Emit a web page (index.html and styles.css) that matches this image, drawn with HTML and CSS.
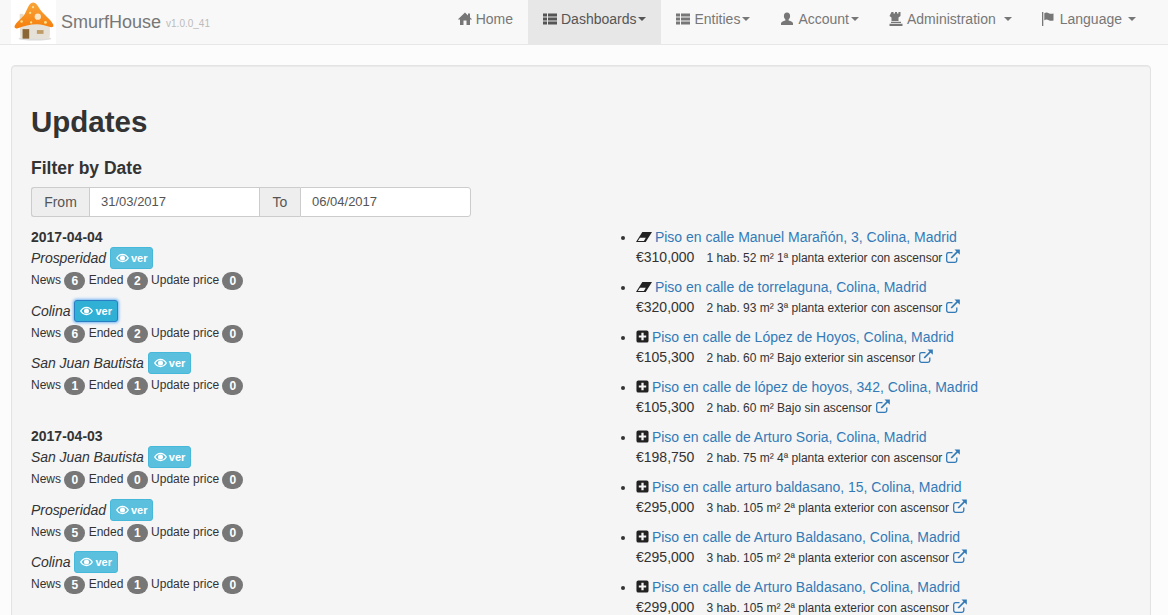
FILE: index.html
```html
<!DOCTYPE html>
<html lang="en">
<head>
  <meta charset="UTF-8">
  <meta name="viewport" content="width=device-width, initial-scale=1.0">
  <title>SmurfHouse</title>
  <link rel="stylesheet" href="styles.css">
</head>
<body>
  <svg class="icon-defs" width="0" height="0">
    <symbol id="i-home" viewBox="0 0 14 14"><path d="M7 .5 L10 3.400 V1.500 H12 V5.400 L14.200 7.500 H12 V13 H8.500 V8.500 H5.500 V13 H2 V7.500 H-.2 Z"/></symbol>
    <symbol id="i-list" viewBox="0 0 14 14"><path d="M0 1.500h4v3H0zM5 1.500h9v3H5zM0 5.500h4v3H0zM5 5.500h9v3H5zM0 9.500h4v3H0zM5 9.500h9v3H5z"/></symbol>
    <symbol id="i-user" viewBox="0 0 14 14"><path d="M7 .5c2 0 3.100 1.500 3.100 3.500 0 1.500-.6 2.700-1.500 3.400v1.100c2.500.7 4.400 1.500 4.400 2.800V13H1v-1.700c0-1.300 1.900-2.100 4.400-2.800V7.400C4.500 6.700 3.900 5.500 3.900 4 3.900 2 5 .5 7 .5z"/></symbol>
    <symbol id="i-tower" viewBox="0 0 14 14"><path d="M2.500 0h2v1.500h1.500V0h2v1.500h1.500V0h2v4l-2 1.500v3.500h-7V5.500l-2-1.500zM2 9.800h10v1.200H2zM.5 11.800h13V14H.5z"/></symbol>
    <symbol id="i-flag" viewBox="0 0 14 14"><path d="M0 0h1.300v14H0zM2.300 1.200c1.500-.8 3-.8 4.500 0s3 .8 4.700.2v7c-1.700.6-3.200.6-4.700-.2s-3-.8-4.500 0z"/></symbol>
    <symbol id="i-eye" viewBox="0 0 14 10"><path fill-rule="evenodd" d="M7 .5C10 .5 12.500 2.500 14 5c-1.500 2.500-4 4.500-7 4.500S1.500 7.500 0 5C1.500 2.500 4 .5 7 .5zM7 1.700C4.900 1.700 2.900 3 1.600 5 2.900 7 4.900 8.300 7 8.300S11.100 7 12.400 5C11.100 3 9.100 1.700 7 1.700zM7 2.300A2.700 2.700 0 1 1 7 7.700 2.700 2.700 0 0 1 7 2.300z"/></symbol>
    <symbol id="i-eraser" viewBox="0 0 16 12"><path d="M6.300 1H16L9.700 11H0z"/><path fill="#f5f5f5" d="M1.800 10 4 6.800H9.800L7.900 10z"/></symbol>
    <symbol id="i-plus" viewBox="0 0 14 14"><path fill-rule="evenodd" d="M2.500 .5h9a2 2 0 0 1 2 2v9a2 2 0 0 1-2 2h-9a2 2 0 0 1-2-2v-9a2 2 0 0 1 2-2zM5.800 3v2.800H3v2.400h2.800V11h2.400V8.200H11V5.800H8.200V3z"/></symbol>
    <symbol id="i-ext" viewBox="0 0 14 14"><path fill="none" stroke="currentColor" stroke-width="1.300" d="M10.800 8.500v3a1.800 1.800 0 0 1-1.800 1.800H2.500A1.800 1.800 0 0 1 .7 11.500V5.500A1.800 1.800 0 0 1 2.500 3.700H6.500"/><path fill="none" stroke="currentColor" stroke-width="1.700" d="M5.200 9 11.500 2.700"/><path d="M8.500 .4H13.800V5.700z"/></symbol>
  </svg>

  <nav class="navbar">
    <a class="brand" href="#">
      <span class="brand-logo">
        <svg width="42" height="42" viewBox="0 0 44 43">
          <defs>
            <linearGradient id="cap" x1="0" y1="0" x2="0" y2="1">
              <stop offset="0" stop-color="#f9a53c"/>
              <stop offset="1" stop-color="#f57f0c"/>
            </linearGradient>
          </defs>
          <ellipse cx="23" cy="40" rx="17" ry="2" fill="#dcdcdc"/>
          <path d="M7 14h4v8H7z" fill="#e8dcc8"/>
          <path d="M8 24h30c1 5 1 11 0 16H8c-1-5-1-11 0-16z" fill="#e6e1d8"/>
          <path d="M10 30h7v10h-7z" fill="#8a6636"/>
          <path d="M25 31h7v4h-7z" fill="#c09c68"/>
          <path d="M21 2c3 0 5 3 7 7 4 6 11 10 14 16 1 2 0 3-2 3-5-1-10-3-15-3-7 0-14 2-20 4-3 1-4-1-3-3 2-4 6-6 9-10 4-5 5-14 10-14z" fill="url(#cap)"/>
          <circle cx="26" cy="17" r="3.300" fill="#fbe6c4"/>
          <circle cx="21" cy="7" r="1.200" fill="#fde08a"/>
          <circle cx="18" cy="13" r="1.200" fill="#fde08a"/>
          <circle cx="9" cy="22" r="1.300" fill="#fde08a"/>
          <circle cx="34" cy="23" r="1.500" fill="#fde08a"/>
          <circle cx="19" cy="23" r="1.200" fill="#fde08a"/>
        </svg>
      </span>
      <span class="brand-name">SmurfHouse</span>
      <small class="brand-version">v1.0.0_41</small>
    </a>
    <ul class="nav-menu">
      <li><a href="#"><svg class="ico"><use href="#i-home"/></svg>Home</a></li>
      <li class="active"><a href="#"><svg class="ico"><use href="#i-list"/></svg>Dashboards<b class="caret"></b></a></li>
      <li><a href="#"><svg class="ico"><use href="#i-list"/></svg>Entities<b class="caret"></b></a></li>
      <li><a href="#"><svg class="ico"><use href="#i-user"/></svg>Account<b class="caret"></b></a></li>
      <li class="nav-admin"><a href="#"><svg class="ico"><use href="#i-tower"/></svg>Administration <b class="caret caret-spaced"></b></a></li>
      <li><a href="#"><svg class="ico"><use href="#i-flag"/></svg>Language <b class="caret caret-spaced"></b></a></li>
    </ul>
  </nav>

  <div class="well">
    <h1>Updates</h1>
    <h3>Filter by Date</h3>
    <div class="input-group">
      <span class="addon">From</span>
      <input class="date-input date-from" type="text" value="31/03/2017">
      <span class="addon addon-mid">To</span>
      <input class="date-input date-to" type="text" value="06/04/2017">
    </div>

    <div class="row">
      <div class="col">
        <section class="day">
          <h5>2017-04-04</h5>
          <div class="zone">
            <div class="zone-name"><em>Prosperidad</em> <a class="btn-ver" href="#"><svg class="ico-eye"><use href="#i-eye"/></svg>ver</a></div>
            <div class="counts">News <span class="badge">6</span> Ended <span class="badge">2</span> Update price <span class="badge">0</span></div>
          </div>
          <div class="zone">
            <div class="zone-name"><em>Colina</em> <a class="btn-ver focus" href="#"><svg class="ico-eye"><use href="#i-eye"/></svg>ver</a></div>
            <div class="counts">News <span class="badge">6</span> Ended <span class="badge">2</span> Update price <span class="badge">0</span></div>
          </div>
          <div class="zone">
            <div class="zone-name"><em>San Juan Bautista</em> <a class="btn-ver" href="#"><svg class="ico-eye"><use href="#i-eye"/></svg>ver</a></div>
            <div class="counts">News <span class="badge">1</span> Ended <span class="badge">1</span> Update price <span class="badge">0</span></div>
          </div>
        </section>
        <section class="day">
          <h5>2017-04-03</h5>
          <div class="zone">
            <div class="zone-name"><em>San Juan Bautista</em> <a class="btn-ver" href="#"><svg class="ico-eye"><use href="#i-eye"/></svg>ver</a></div>
            <div class="counts">News <span class="badge">0</span> Ended <span class="badge">0</span> Update price <span class="badge">0</span></div>
          </div>
          <div class="zone">
            <div class="zone-name"><em>Prosperidad</em> <a class="btn-ver" href="#"><svg class="ico-eye"><use href="#i-eye"/></svg>ver</a></div>
            <div class="counts">News <span class="badge">5</span> Ended <span class="badge">1</span> Update price <span class="badge">0</span></div>
          </div>
          <div class="zone">
            <div class="zone-name"><em>Colina</em> <a class="btn-ver" href="#"><svg class="ico-eye"><use href="#i-eye"/></svg>ver</a></div>
            <div class="counts">News <span class="badge">5</span> Ended <span class="badge">1</span> Update price <span class="badge">0</span></div>
          </div>
        </section>
      </div>

      <div class="col">
        <ul class="flats">
          <li>
            <svg class="ico-eraser"><use href="#i-eraser"/></svg> <a href="#">Piso en calle Manuel Marañón, 3, Colina, Madrid</a>
            <div class="flat-info"><span class="price">€310,000</span><small>1 hab. 52 m² 1ª planta exterior con ascensor</small> <a href="#"><svg class="ico-ext"><use href="#i-ext"/></svg></a></div>
          </li>
          <li>
            <svg class="ico-eraser"><use href="#i-eraser"/></svg> <a href="#">Piso en calle de torrelaguna, Colina, Madrid</a>
            <div class="flat-info"><span class="price">€320,000</span><small>2 hab. 93 m² 3ª planta exterior con ascensor</small> <a href="#"><svg class="ico-ext"><use href="#i-ext"/></svg></a></div>
          </li>
          <li>
            <svg class="ico-plus"><use href="#i-plus"/></svg> <a href="#">Piso en calle de López de Hoyos, Colina, Madrid</a>
            <div class="flat-info"><span class="price">€105,300</span><small>2 hab. 60 m² Bajo exterior sin ascensor</small> <a href="#"><svg class="ico-ext"><use href="#i-ext"/></svg></a></div>
          </li>
          <li>
            <svg class="ico-plus"><use href="#i-plus"/></svg> <a href="#">Piso en calle de lópez de hoyos, 342, Colina, Madrid</a>
            <div class="flat-info"><span class="price">€105,300</span><small>2 hab. 60 m² Bajo sin ascensor</small> <a href="#"><svg class="ico-ext"><use href="#i-ext"/></svg></a></div>
          </li>
          <li>
            <svg class="ico-plus"><use href="#i-plus"/></svg> <a href="#">Piso en calle de Arturo Soria, Colina, Madrid</a>
            <div class="flat-info"><span class="price">€198,750</span><small>2 hab. 75 m² 4ª planta exterior con ascensor</small> <a href="#"><svg class="ico-ext"><use href="#i-ext"/></svg></a></div>
          </li>
          <li>
            <svg class="ico-plus"><use href="#i-plus"/></svg> <a href="#">Piso en calle arturo baldasano, 15, Colina, Madrid</a>
            <div class="flat-info"><span class="price">€295,000</span><small>3 hab. 105 m² 2ª planta exterior con ascensor</small> <a href="#"><svg class="ico-ext"><use href="#i-ext"/></svg></a></div>
          </li>
          <li>
            <svg class="ico-plus"><use href="#i-plus"/></svg> <a href="#">Piso en calle de Arturo Baldasano, Colina, Madrid</a>
            <div class="flat-info"><span class="price">€295,000</span><small>3 hab. 105 m² 2ª planta exterior con ascensor</small> <a href="#"><svg class="ico-ext"><use href="#i-ext"/></svg></a></div>
          </li>
          <li>
            <svg class="ico-plus"><use href="#i-plus"/></svg> <a href="#">Piso en calle de Arturo Baldasano, Colina, Madrid</a>
            <div class="flat-info"><span class="price">€299,000</span><small>3 hab. 105 m² 2ª planta exterior con ascensor</small> <a href="#"><svg class="ico-ext"><use href="#i-ext"/></svg></a></div>
          </li>
        </ul>
      </div>
    </div>
  </div>
</body>
</html>
```

FILE: styles.css
```css
html {
  overflow: hidden;
}

body {
  margin: 0;
  background-color: #fcfcfc;
  color: #333;
  font-family: "Liberation Sans", Arial, sans-serif;
  font-size: 14px;
  line-height: 20px;
}

a {
  color: #337ab7;
  text-decoration: none;
}

.icon-defs {
  position: absolute;
}

/* navbar */
.navbar {
  display: flex;
  height: 44px;
  background-color: #f8f8f8;
  border-bottom: 1px solid #e7e7e7;
  margin-bottom: 20px;
}

.brand {
  display: flex;
  align-items: center;
  margin-left: 11px;
  color: #777;
}

.brand-logo {
  display: block;
  width: 45px;
  height: 44px;
  background-color: #fff;
}

.brand-logo svg {
  display: block;
  margin-left: 2px;
}

.brand-name {
  margin-left: 5px;
  font-size: 18px;
}

.brand-version {
  margin: 3px 0 0 5px;
  color: #bbb;
  font-size: 10px;
}

.nav-menu {
  display: flex;
  list-style: none;
  margin: 0 17px 0 auto;
  padding: 0;
}

.nav-menu a {
  display: flex;
  align-items: center;
  height: 38px;
  padding: 0 15px 6px;
  color: #777;
}

.nav-menu .active a {
  background-color: #e7e7e7;
  color: #555;
}

.ico {
  width: 14px;
  height: 14px;
  margin-right: 4px;
  fill: currentColor;
}

.caret {
  display: inline-block;
  margin-left: 2px;
  border-top: 4px solid;
  border-left: 4px solid transparent;
  border-right: 4px solid transparent;
}

.caret-spaced {
  margin-left: 6px;
}

.nav-admin .caret-spaced {
  margin-left: 8px;
}

/* main panel */
.well {
  margin: 0 17px 20px 11px;
  padding: 19px;
  min-height: 600px;
  background-color: #f5f5f5;
  border: 1px solid #e3e3e3;
  border-radius: 4px;
  box-shadow: inset 0 1px 1px rgba(0, 0, 0, 0.05);
}

h1 {
  margin: 17px 0 0;
  font-size: 29.500px;
  font-weight: 700;
  line-height: 40px;
}

h3 {
  margin: 16px 0 9px;
  font-size: 17.5px;
  font-weight: 700;
  line-height: 20px;
}

.input-group {
  display: flex;
  width: 440px;
  height: 30px;
}

.addon {
  box-sizing: border-box;
  width: 58px;
  padding-top: 4px;
  text-align: center;
  color: #555;
  background-color: #eee;
  border: 1px solid #ccc;
  border-right: 0;
  border-radius: 3px 0 0 3px;
}

.addon-mid {
  width: 41px;
  border-radius: 0;
}

.date-input {
  box-sizing: border-box;
  height: 30px;
  padding: 0 11px 2px;
  color: #555;
  font-family: inherit;
  font-size: 13px;
  background-color: #fff;
  border: 1px solid #ccc;
}

.date-from {
  width: 170px;
  border-right: 0;
}

.date-to {
  width: 171px;
  border-radius: 0 3px 3px 0;
}

.row {
  display: flex;
  margin: 10px -15px 0;
}

.col {
  width: 50%;
  padding: 0 15px;
}

/* left column */
.day {
  margin-bottom: 31px;
}

h5 {
  margin: 0;
  font-size: 14px;
  font-weight: 700;
  line-height: 20px;
}

.zone {
  margin-bottom: 9.6px;
}

.zone-name {
  display: flex;
  align-items: center;
  gap: 4px;
  height: 22px;
}

.zone-name em {
  letter-spacing: -0.05px;
}

.btn-ver {
  display: inline-flex;
  align-items: center;
  box-sizing: border-box;
  height: 22px;
  padding: 0 5px;
  color: #fff;
  font-size: 11px;
  font-weight: 700;
  background-color: #5bc0de;
  border: 1px solid #46b8da;
  border-radius: 3px;
}

.btn-ver.focus {
  background-color: #31b0d5;
  border-color: #2a7fc4;
  box-shadow: 0 0 3px 1px #74b5f2;
}

.ico-eye {
  width: 13px;
  height: 10px;
  margin-right: 2px;
  fill: currentColor;
}

.counts {
  margin-top: 1px;
  height: 20px;
  font-size: 12px;
  white-space: nowrap;
}

.badge {
  display: inline-block;
  min-width: 7px;
  padding: 3px 7px;
  color: #fff;
  font-size: 12px;
  font-weight: 700;
  line-height: 12px;
  text-align: center;
  vertical-align: -1px;
  background-color: #777;
  border-radius: 10px;
}

/* right column */
.flats {
  margin: 0;
  padding-left: 40px;
}

.flats li {
  height: 50px;
}

.ico-eraser {
  width: 16px;
  height: 12px;
  margin-right: -1px;
  vertical-align: -1px;
  fill: #222;
}

.ico-plus {
  width: 13px;
  height: 13px;
  margin-right: -1px;
  vertical-align: -1px;
  fill: #222;
}

.flat-info {
  display: flex;
  align-items: center;
  height: 20px;
}

.price {
  margin-right: 12px;
}

.flat-info small {
  margin: 2px 4px 0 0;
  font-size: 12px;
}

.ico-ext {
  display: block;
  width: 14px;
  height: 14px;
  margin-bottom: 2px;
  color: #337ab7;
  fill: currentColor;
}
```
